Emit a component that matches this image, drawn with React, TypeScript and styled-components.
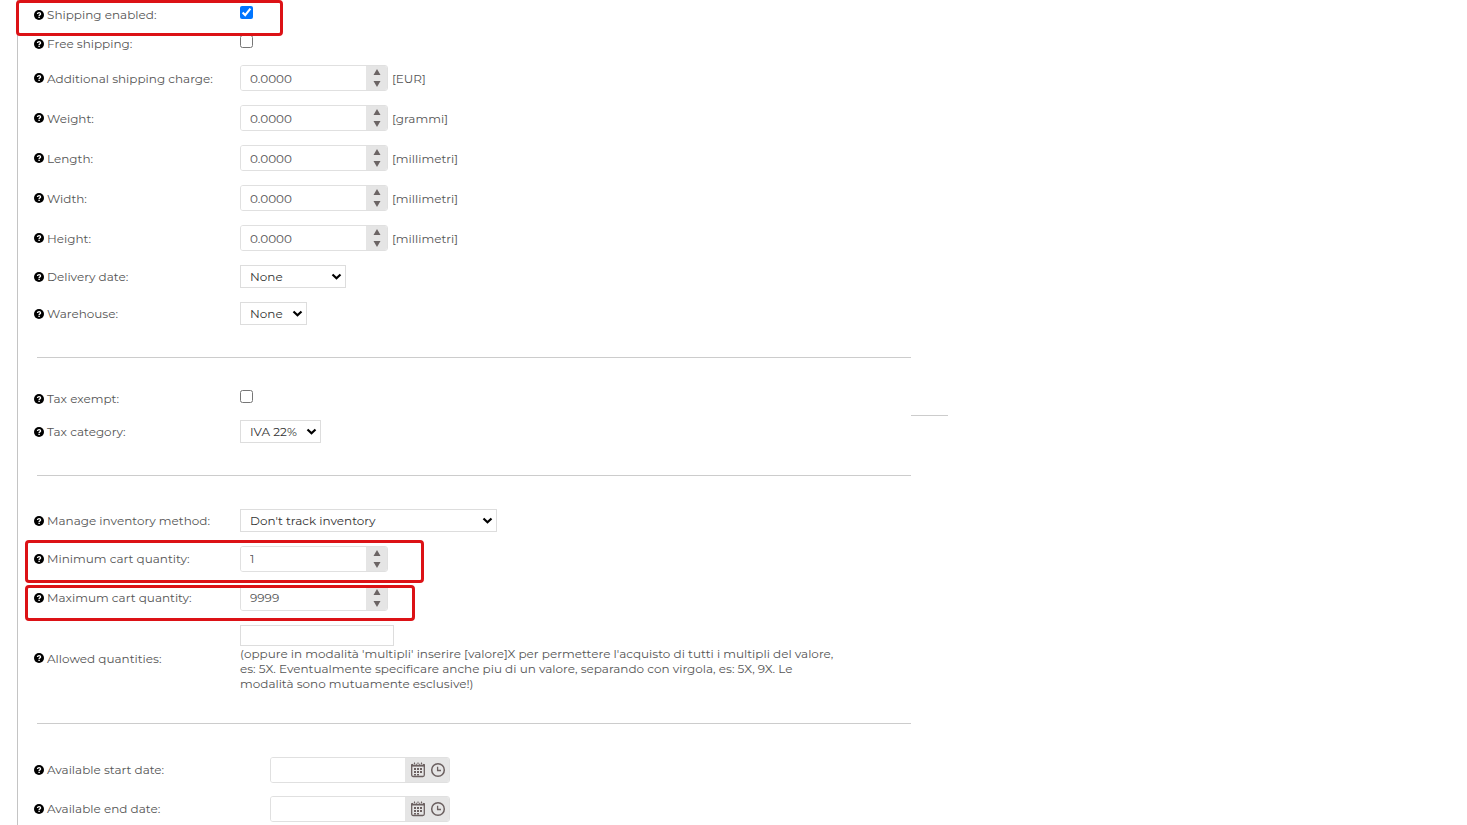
import React, { useId, useState } from "react";
import styled, { createGlobalStyle, css } from "styled-components";

const GlobalStyle = createGlobalStyle`
  *, *::before, *::after { box-sizing: border-box; }
  body {
    margin: 0;
    background: #fff;
    color: #555;
    font: 400 12px/15px Montserrat, Inter, "Open Sans", sans-serif;
  }
  input, select, button { font: inherit; color: inherit; }
`;

const Form = styled.form`
  position: relative;
  min-height: 100vh;
  margin-left: 17px;
  padding-left: 16px;
  border-left: 1px solid #c4c4c4;
`;

const Section = styled.section`
  position: relative;
  max-width: 877px;
`;

const Divider = styled.hr`
  max-width: 874px;
  height: 1px;
  margin: 25px 0 26px 3px;
  border: 0;
  background: #ccc;
`;

const PanelEdge = styled.div`
  position: absolute;
  left: 100%;
  top: 31px;
  width: 37px;
  height: 1px;
  background: #ccc;
`;

const rowHeights = { check: 29, select: 37, number: 40, compact: 39 };

const Row = styled.div<{ $kind?: keyof typeof rowHeights }>`
  position: relative;
  display: grid;
  grid-template-columns: 206px 1fr;
  align-items: center;
  ${({ $kind }) =>
    $kind
      ? css`min-height: ${rowHeights[$kind]}px;`
      : css`padding: 8px 0 7px;`}
`;

const LabelCell = styled.div`
  display: flex;
  align-items: center;
  gap: 3px;
  white-space: nowrap;
`;

const Control = styled.div<{ $indent?: boolean }>`
  display: flex;
  align-items: center;
  gap: 4px;
  padding-left: ${({ $indent }) => ($indent ? 30 : 0)}px;
`;

const Checkbox = styled.input`
  width: 13px;
  height: 13px;
  margin: 0 0 4px;
`;

const SelectBox = styled.div<{ $width: number }>`
  position: relative;
  width: ${({ $width }) => $width}px;
  height: 23px;

  svg {
    position: absolute;
    right: 4px;
    top: 8px;
    pointer-events: none;
  }
`;

const Select = styled.select`
  display: block;
  width: 100%;
  height: 100%;
  padding: 0 9px;
  border: 1px solid #ddd;
  border-radius: 0;
  background: #fff;
  color: #333;
  appearance: none;
`;

const Field = styled.div<{ $width: number }>`
  display: flex;
  width: ${({ $width }) => $width}px;
  height: 26px;
  border: 1px solid #e0e0e0;
  border-radius: 3px;
  overflow: hidden;
`;

const FieldInput = styled.input`
  flex: 1;
  min-width: 0;
  padding: 0 9px;
  border: 0;
  background: #fff;
`;

const Spinner = styled.div`
  display: flex;
  flex-direction: column;
  width: 21px;
  background: #e5e5e5;
`;

const SpinButton = styled.button`
  display: flex;
  flex: 1;
  align-items: center;
  justify-content: center;
  padding: 0;
  border: 0;
  background: none;
`;

const Pickers = styled.div`
  display: flex;
  align-items: center;
  justify-content: flex-end;
  gap: 4px;
  width: 44px;
  padding-right: 3px;
  background: #e5e5e5;
`;

const PickerButton = styled.button`
  display: flex;
  padding: 0;
  border: 0;
  background: none;
`;

const Allowed = styled.div`
  display: flex;
  flex-direction: column;
  align-items: flex-start;
`;

const PlainInput = styled.input`
  width: 154px;
  height: 21px;
  padding: 0 4px;
  border: 1px solid #ddd;
`;

const Hint = styled.p`
  margin: 0;
  white-space: nowrap;
`;

const marks = {
  shipping: { left: -18, top: 0, width: 267, height: 36 },
  minimum: { left: -9, top: 1, width: 399, height: 43 },
  maximum: { left: -9, top: 7, width: 390, height: 36 },
};

const Highlight = styled.div<{ $mark: keyof typeof marks }>`
  position: absolute;
  z-index: 1;
  ${({ $mark }) => css`
    left: ${marks[$mark].left}px;
    top: ${marks[$mark].top}px;
    width: ${marks[$mark].width}px;
    height: ${marks[$mark].height}px;
  `}
  border: 3px solid #dc1216;
  border-radius: 4px;
  pointer-events: none;
`;

const HelpIcon = () => (
  <svg width="10" height="10" viewBox="0 0 10 10" aria-hidden="true">
    <circle cx="5" cy="5" r="5" fill="#000" />
    <path d="M3.5 3.9C3.5 2.2 6.6 2.2 6.6 3.9C6.6 4.9 5.1 4.9 5.1 6" fill="none" stroke="#fff" strokeWidth="1.3" />
    <rect x="4.4" y="6.7" width="1.4" height="1.3" fill="#fff" />
  </svg>
);

const Chevron = () => (
  <svg width="11" height="8" viewBox="0 0 11 8" aria-hidden="true">
    <path d="M1.5 1.5L5.5 5.3L9.5 1.5" fill="none" stroke="#000" strokeWidth="2.2" />
  </svg>
);

const Arrow = ({ down }: { down?: boolean }) => (
  <svg width="8" height="6" viewBox="0 0 8 6" aria-hidden="true">
    <path d={down ? "M.5 0H7.5L4 6Z" : "M.5 6H7.5L4 0Z"} fill="#6b6464" />
  </svg>
);

const CalendarIcon = () => (
  <svg width="16" height="16" viewBox="0 0 16 16" aria-hidden="true">
    <rect x="1.7" y="2.5" width="12.6" height="12" rx="1.5" fill="none" stroke="#6b6060" strokeWidth="1.3" />
    <path d="M1 2.2h14v2.4H1z" fill="#6b6060" />
    <path d="M4.5 .6v2.4M8 .6v2.4M11.5 .6v2.4" stroke="#e5e5e5" strokeWidth="2.4" />
    <path d="M4.5 .6v2M8 .6v2M11.5 .6v2" stroke="#6b6060" strokeWidth="1.1" />
    <path d="M7 6h2v2H7zM10 6h2v2h-2zM4 9h2v2H4zM7 9h2v2H7zM10 9h2v2h-2zM4 12h2v1.5H4zM7 12h2v1.5H7zM4 6h2v2H4z" fill="#6b6060" />
  </svg>
);

const ClockIcon = () => (
  <svg width="16" height="16" viewBox="0 0 16 16" aria-hidden="true">
    <circle cx="8" cy="8" r="6.3" fill="none" stroke="#6b6060" strokeWidth="1.5" />
    <path d="M7.6 4.8V8.5H11" fill="none" stroke="#6b6060" strokeWidth="1.3" />
  </svg>
);

const Label = ({ id, children }: { id: string; children: React.ReactNode }) => (
  <LabelCell>
    <HelpIcon />
    <label htmlFor={id}>{children}</label>
  </LabelCell>
);

type MarkProp = { mark?: keyof typeof marks };

function CheckRow({ label, checked, mark }: { label: string; checked?: boolean } & MarkProp) {
  const id = useId();
  return (
    <Row $kind="check">
      <Label id={id}>{label}</Label>
      <Control>
        <Checkbox id={id} type="checkbox" defaultChecked={checked} />
      </Control>
      {mark && <Highlight $mark={mark} />}
    </Row>
  );
}

function NumberRow({ label, initial, unit, digits = 0, mark }: {
  label: string; initial: number; unit?: string; digits?: number;
} & MarkProp) {
  const id = useId();
  const [value, setValue] = useState(initial.toFixed(digits));
  const step = (by: number) => setValue((Number(value) + by).toFixed(digits));
  return (
    <Row $kind={unit ? "number" : "compact"}>
      <Label id={id}>{label}</Label>
      <Control>
        <Field $width={148}>
          <FieldInput id={id} value={value} inputMode="decimal" onChange={(e) => setValue(e.target.value)} />
          <Spinner>
            <SpinButton type="button" aria-label="Increase value" onClick={() => step(1)}><Arrow /></SpinButton>
            <SpinButton type="button" aria-label="Decrease value" onClick={() => step(-1)}><Arrow down /></SpinButton>
          </Spinner>
        </Field>
        {unit && <span>[{unit}]</span>}
      </Control>
      {mark && <Highlight $mark={mark} />}
    </Row>
  );
}

function SelectRow({ label, value, width }: { label: string; value: string; width: number }) {
  const id = useId();
  return (
    <Row $kind="select">
      <Label id={id}>{label}</Label>
      <Control>
        <SelectBox $width={width}>
          <Select id={id}>
            <option>{value}</option>
          </Select>
          <Chevron />
        </SelectBox>
      </Control>
    </Row>
  );
}

function DateRow({ label }: { label: string }) {
  const id = useId();
  return (
    <Row $kind="compact">
      <Label id={id}>{label}</Label>
      <Control $indent>
        <Field $width={180}>
          <FieldInput id={id} type="text" />
          <Pickers>
            <PickerButton type="button" aria-label="Open calendar"><CalendarIcon /></PickerButton>
            <PickerButton type="button" aria-label="Open time list"><ClockIcon /></PickerButton>
          </Pickers>
        </Field>
      </Control>
    </Row>
  );
}

export default function App() {
  return (
    <>
      <GlobalStyle />
      <Form>
        <Section>
          <CheckRow label="Shipping enabled:" checked mark="shipping" />
          <CheckRow label="Free shipping:" />
          <NumberRow label="Additional shipping charge:" initial={0} digits={4} unit="EUR" />
          <NumberRow label="Weight:" initial={0} digits={4} unit="grammi" />
          <NumberRow label="Length:" initial={0} digits={4} unit="millimetri" />
          <NumberRow label="Width:" initial={0} digits={4} unit="millimetri" />
          <NumberRow label="Height:" initial={0} digits={4} unit="millimetri" />
          <SelectRow label="Delivery date:" value="None" width={106} />
          <SelectRow label="Warehouse:" value="None" width={67} />
        </Section>
        <Divider />
        <Section>
          <CheckRow label="Tax exempt:" />
          <SelectRow label="Tax category:" value="IVA 22%" width={81} />
          <PanelEdge />
        </Section>
        <Divider />
        <Section>
          <SelectRow label="Manage inventory method:" value="Don't track inventory" width={257} />
          <NumberRow label="Minimum cart quantity:" initial={1} mark="minimum" />
          <NumberRow label="Maximum cart quantity:" initial={9999} mark="maximum" />
          <Row>
            <Label id="allowed-quantities">Allowed quantities:</Label>
            <Allowed>
              <PlainInput id="allowed-quantities" type="text" />
              <Hint>
                (oppure in modalità 'multipli' inserire [valore]X per permettere l'acquisto di tutti i multipli del valore,<br />
                es: 5X. Eventualmente specificare anche piu di un valore, separando con virgola, es: 5X, 9X. Le<br />
                modalità sono mutuamente esclusive!)
              </Hint>
            </Allowed>
          </Row>
        </Section>
        <Divider />
        <Section>
          <DateRow label="Available start date:" />
          <DateRow label="Available end date:" />
        </Section>
      </Form>
    </>
  );
}
